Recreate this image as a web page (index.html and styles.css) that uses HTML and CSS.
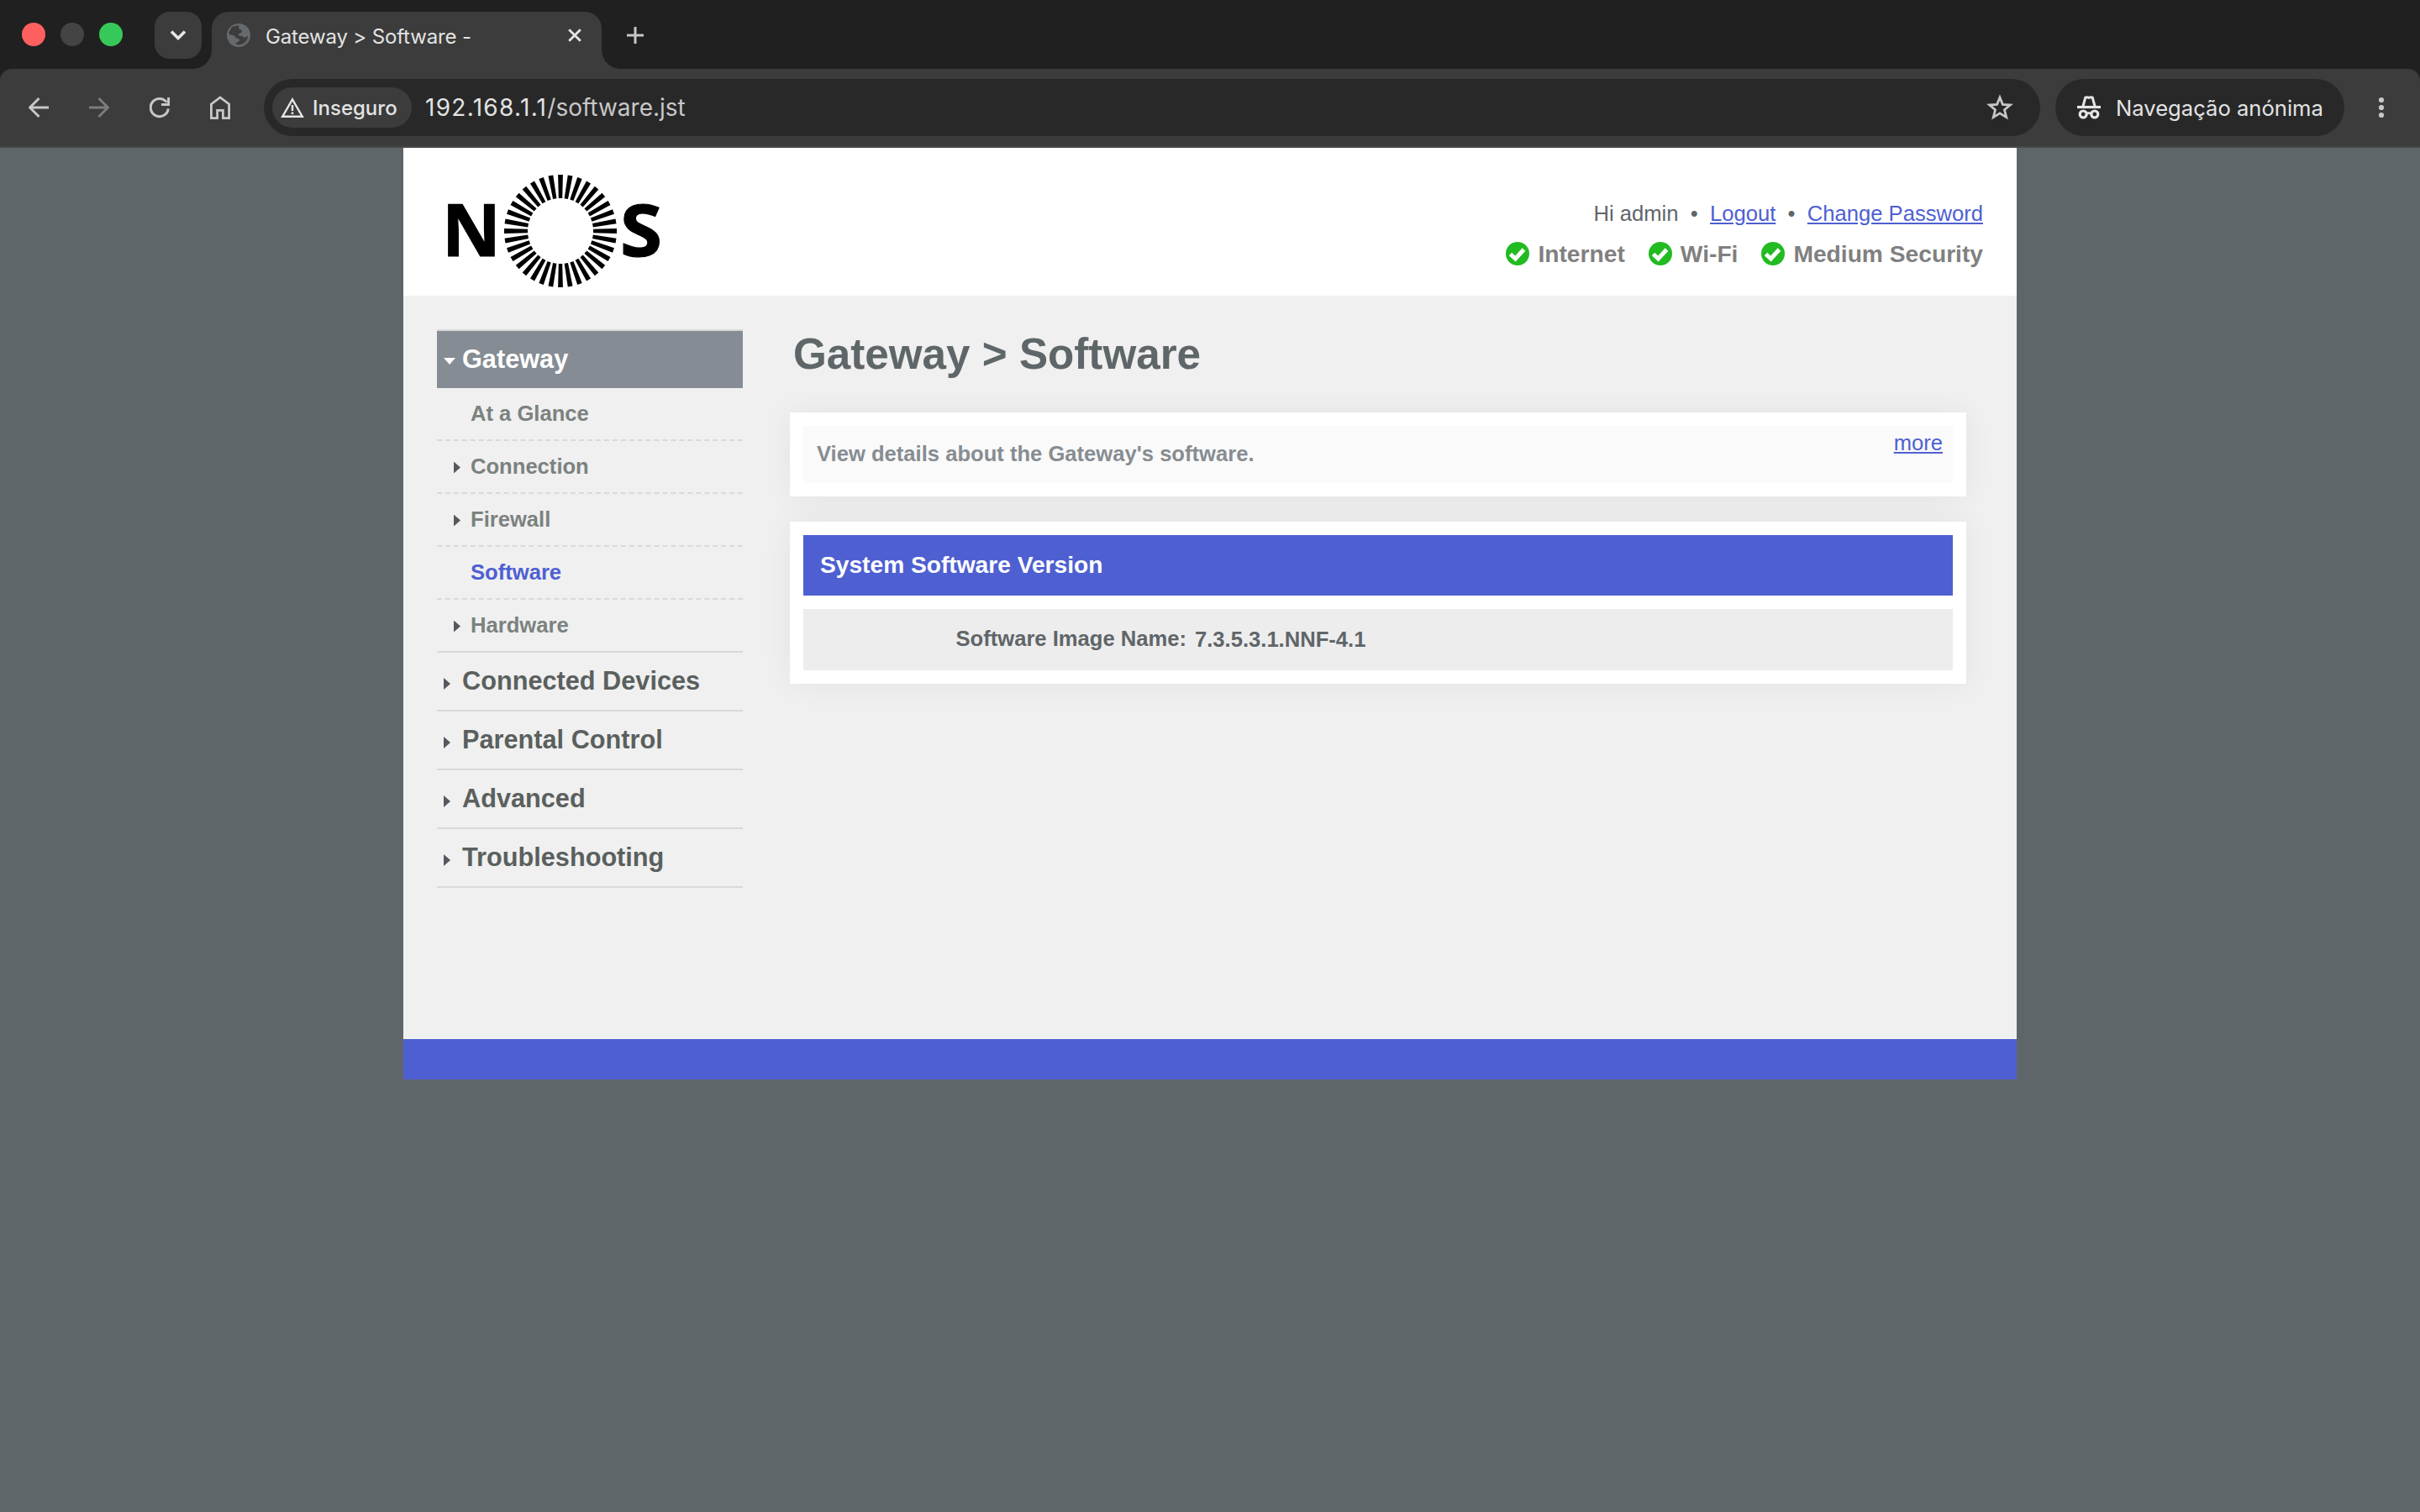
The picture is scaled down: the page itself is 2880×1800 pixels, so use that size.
FILE: index.html
```
<!DOCTYPE html>
<html lang="pt">
<head>
  <meta charset="UTF-8">
  <title>Gateway &gt; Software -</title>
  <link rel="stylesheet" href="styles.css">
</head>
<body>

<div class="tabstrip">
  <div class="lights">
    <span class="light red"></span>
    <span class="light grey"></span>
    <span class="light green"></span>
  </div>
  <div class="tab-search">
    <svg width="20" height="14" viewBox="0 0 20 14"><path d="M2 2.5l8 8 8-8" fill="none" stroke="#e6e6e6" stroke-width="3.6"/></svg>
  </div>
  <div class="tab">
    <svg class="favicon" width="28" height="28" viewBox="0 0 28 28">
      <circle cx="14" cy="14" r="14" fill="#66696e"/>
      <path d="M15 3C13.500 5 14 7.500 17 7.500C18.500 9 17.500 11 16 11.500C14 12 13 13 14.500 14.500C18 14.500 20 15.500 20.500 17C22 16.500 24 15.500 25 14.500C25 20 21 25 14 25.200C12.500 25 11 24.500 10.500 23.500C12 21.500 14.500 22.500 14.800 20C14.500 17.500 13 17.500 10.500 17.200C10 14.500 8 13.500 3 13.500C3.500 7 8 3 15 3Z" fill="#3c3c3c"/>
      <path d="M4 12.500C6 13 8.500 12 10 12.500C12 13 13.500 12 13.500 10C13 8 11 8.500 11 6.500L13.500 2L6 4L2 11Z" fill="#3c3c3c"/>
      <path d="M17 3.500C20.500 4.500 24 8 24.500 12C22.500 14 19.500 13 18.500 11.500C19.500 9 19 7 16.500 6Z" fill="#66696e"/>
    </svg>
    <span class="tab-title">Gateway &gt; Software -</span>
    <svg class="tab-close" width="16" height="16" viewBox="0 0 16 16"><path d="M1.200 1.200l13.600 13.600M14.800 1.200L1.200 14.800" stroke="#e6e6e6" stroke-width="2.800"/></svg>
  </div>
  <svg class="new-tab" width="20" height="20" viewBox="0 0 20 20"><path d="M10 0v20M0 10h20" stroke="#c7c7c7" stroke-width="3"/></svg>
</div>

<div class="toolbar">
  <div class="nav-icons">
    <svg width="24" height="28" viewBox="0 0 24 28"><path d="M24 14H2M12.500 3L1.600 14l10.900 11" fill="none" stroke="#c7c7c7" stroke-width="3"/></svg>
    <svg width="24" height="28" viewBox="0 0 24 28"><path d="M0 14h22M11.500 3l10.900 11-10.900 11" fill="none" stroke="#7c7c7c" stroke-width="3"/></svg>
    <svg width="24" height="28" viewBox="0 0 24 28"><path d="M22.300 15.500A10.600 10.600 0 1 1 20.300 7.700M22.600 2v8.600H14" fill="none" stroke="#c7c7c7" stroke-width="3"/></svg>
    <svg width="24" height="28" viewBox="0 0 24 28"><path d="M1.400 10L12 2l10.600 8v16.600H15.400v-9.200H8.600v9.200H1.400z" fill="none" stroke="#c7c7c7" stroke-width="2.800"/></svg>
  </div>
  <div class="omnibox">
    <div class="chip">
      <svg width="28" height="24" viewBox="0 0 28 24"><path d="M14 2.400L25.800 22.700H2.200z" fill="none" stroke="#e6e6e6" stroke-width="2.400"/><path d="M14 9v7M14 17.500v2.600" stroke="#e6e6e6" stroke-width="2.500"/></svg>
      <span>Inseguro</span>
    </div>
    <div class="url"><b>192.168.1.1</b>/software.jst</div>
    <svg class="star" width="32" height="32" viewBox="0 0 32 32"><path d="M16 4l3.400 8.300 9 .7-6.900 5.800 2.200 8.800L16 22.900l-7.700 4.700 2.200-8.800L3.600 13l9-.7z" fill="none" stroke="#c7c7c7" stroke-width="2.800"/></svg>
  </div>
  <div class="incognito">
    <svg width="28" height="30" viewBox="0 0 28 30">
      <path d="M0 14.500h28" stroke="#e6e6e6" stroke-width="3.200"/>
      <path d="M6.800 14L9.800 3Q11.500 2.200 14 3.400Q16.500 2.200 18.200 3L21.200 14" fill="none" stroke="#e6e6e6" stroke-width="3"/>
      <circle cx="7.200" cy="23" r="4" fill="none" stroke="#e6e6e6" stroke-width="3.200"/>
      <circle cx="20.800" cy="23" r="4" fill="none" stroke="#e6e6e6" stroke-width="3.200"/>
      <path d="M10.500 22.500Q14 20.800 17.500 22.500" fill="none" stroke="#e6e6e6" stroke-width="2.600"/>
    </svg>
    <span>Navegação anónima</span>
  </div>
  <svg class="menu-dots" width="8" height="28" viewBox="0 0 8 28" fill="#c7c7c7"><circle cx="4" cy="5" r="3.100"/><circle cx="4" cy="14" r="3.100"/><circle cx="4" cy="23" r="3.100"/></svg>
</div>

<div class="container">
  <div class="header">
    <svg class="logo" width="280" height="136" viewBox="-20 0 280 136">
      <defs>
        <path id="ray" d="M130.100 1h5.800l-.7 28h-4.400z"/>
        <g id="quarter">
          <use href="#ray"/>
          <use href="#ray" transform="rotate(10 133 68)"/>
          <use href="#ray" transform="rotate(20 133 68)"/>
          <use href="#ray" transform="rotate(30 133 68)"/>
          <use href="#ray" transform="rotate(40 133 68)"/>
          <use href="#ray" transform="rotate(50 133 68)"/>
          <use href="#ray" transform="rotate(60 133 68)"/>
          <use href="#ray" transform="rotate(70 133 68)"/>
          <use href="#ray" transform="rotate(80 133 68)"/>
        </g>
      </defs>
      <text class="logo-letter" x="-8" y="98">N</text>
      <use href="#quarter"/>
      <use href="#quarter" transform="rotate(90 133 68)"/>
      <use href="#quarter" transform="rotate(180 133 68)"/>
      <use href="#quarter" transform="rotate(270 133 68)"/>
      <text class="logo-letter" x="204" y="98" textLength="50" lengthAdjust="spacingAndGlyphs">S</text>
    </svg>
    <div class="user-info">
      <div class="user-links">
        <span>Hi admin</span><span class="dot">•</span><a href="#">Logout</a><span class="dot">•</span><a href="#">Change Password</a>
      </div>
      <div class="status">
        <div class="status-item">
          <svg width="28" height="28" viewBox="0 0 28 28"><circle cx="14" cy="14" r="14" fill="#22bb22"/><path d="M5.500 14.500l6 5.500L21.500 9" fill="none" stroke="#fff" stroke-width="5"/></svg>
          <span>Internet</span>
        </div>
        <div class="status-item">
          <svg width="28" height="28" viewBox="0 0 28 28"><circle cx="14" cy="14" r="14" fill="#22bb22"/><path d="M5.500 14.500l6 5.500L21.500 9" fill="none" stroke="#fff" stroke-width="5"/></svg>
          <span>Wi-Fi</span>
        </div>
        <div class="status-item">
          <svg width="28" height="28" viewBox="0 0 28 28"><circle cx="14" cy="14" r="14" fill="#22bb22"/><path d="M5.500 14.500l6 5.500L21.500 9" fill="none" stroke="#fff" stroke-width="5"/></svg>
          <span>Medium Security</span>
        </div>
      </div>
    </div>
  </div>

  <div class="main">
    <ul class="nav">
      <li class="top active"><i class="arrow-down"></i>Gateway</li>
      <li class="sub">At a Glance</li>
      <li class="sub"><i class="arrow"></i>Connection</li>
      <li class="sub"><i class="arrow"></i>Firewall</li>
      <li class="sub selected">Software</li>
      <li class="sub last"><i class="arrow"></i>Hardware</li>
      <li class="top"><i class="arrow"></i>Connected Devices</li>
      <li class="top"><i class="arrow"></i>Parental Control</li>
      <li class="top"><i class="arrow"></i>Advanced</li>
      <li class="top"><i class="arrow"></i>Troubleshooting</li>
    </ul>

    <div class="content">
      <h1>Gateway &gt; Software</h1>
      <div class="card">
        <div class="tip">
          <p>View details about the Gateway's software.</p>
          <a href="#">more</a>
        </div>
      </div>
      <div class="card">
        <h2>System Software Version</h2>
        <div class="row">
          <span class="label">Software Image Name:</span>
          <span class="value">7.3.5.3.1.NNF-4.1</span>
        </div>
      </div>
    </div>
  </div>

  <div class="footer"></div>
</div>

</body>
</html>
```
FILE: styles.css
```
* {
  box-sizing: border-box;
}
body {
  margin: 0;
  height: 1800px;
  overflow: hidden;
  background: #5f6669;
  color: #5f6669;
  font-family: "Liberation Sans", Arial, sans-serif;
  font-size: 25.6px;
}
svg {
  display: block;
  flex: none;
}
a {
  color: #4e60d1;
}

/* browser chrome */
.tabstrip {
  display: flex;
  height: 82px;
  padding: 14px 0 0 26px;
  background: #202020;
  font-family: Inter, sans-serif;
}
.lights {
  display: flex;
  gap: 18px;
  margin-top: 13px;
}
.light {
  width: 28px;
  height: 28px;
  border-radius: 50%;
}
.red {
  background: #ff5f5f;
}
.grey {
  background: #444;
}
.green {
  background: #36c95a;
}
.tab-search {
  display: flex;
  align-items: center;
  justify-content: center;
  width: 56px;
  height: 56px;
  margin-left: 38px;
  border-radius: 18px;
  background: #3c3c3c;
}
.tab {
  position: relative;
  display: flex;
  align-items: center;
  width: 464px;
  height: 68px;
  margin-left: 12px;
  padding: 0 24px 12px 18px;
  border-radius: 20px 20px 0 0;
  background: #3c3c3c;
}
/* curved feet of the tab */
.tab::before,
.tab::after {
  content: "";
  position: absolute;
  bottom: 0;
  width: 22px;
  height: 22px;
}
.tab::before {
  left: -22px;
  background: radial-gradient(circle at 0 0, transparent 21.5px, #3c3c3c 22px);
}
.tab::after {
  right: -22px;
  background: radial-gradient(circle at 100% 0, transparent 21.5px, #3c3c3c 22px);
}
.tab-title {
  margin-left: 18px;
  padding-top: 2px;
  color: #e3e3e3;
  font-size: 24px;
  letter-spacing: -0.15px;
  white-space: nowrap;
}
.tab-close {
  margin-left: auto;
}
.new-tab {
  margin: 18px 0 0 30px;
}
.toolbar {
  display: flex;
  align-items: center;
  height: 94px;
  padding: 0 42px 0 34px;
  border-bottom: 2px solid #484848;
  border-radius: 14px 14px 0 0;
  background: #3c3c3c;
  box-shadow: 0 -14px 0 #202020;
  color: #e3e3e3;
  font-family: Inter, sans-serif;
}
.nav-icons {
  display: flex;
  gap: 48px;
}
.omnibox {
  display: flex;
  align-items: center;
  width: 2114px;
  height: 68px;
  margin-left: 40px;
  padding: 0 32px 0 10px;
  border-radius: 34px;
  background: #282828;
}
.chip {
  display: flex;
  align-items: center;
  width: 166px;
  height: 48px;
  padding-left: 10px;
  border-radius: 24px;
  background: #3c3c3c;
  font-size: 24px;
  font-weight: 500;
}
.chip span {
  margin-left: 10px;
}
.url {
  margin-left: 16px;
  color: #c7c7c7;
  font-size: 28px;
}
.url b {
  color: #e3e3e3;
  font-weight: normal;
  letter-spacing: 1.3px;
}
.star {
  margin-left: auto;
}
.incognito {
  display: flex;
  align-items: center;
  width: 344px;
  height: 68px;
  margin-left: 18px;
  padding-left: 26px;
  border-radius: 34px;
  background: #282828;
  font-size: 25.6px;
  white-space: nowrap;
}
.incognito span {
  margin-left: 18px;
}
.menu-dots {
  margin-left: auto;
}

/* gateway page */
.container {
  width: 1920px;
  margin: 0 auto;
  background: #f0f0f0;
}
.header {
  display: flex;
  justify-content: space-between;
  height: 176px;
  padding: 31px 40px 0 34px;
  background: #fff;
}
.logo-letter {
  font-family: "Noto Sans", sans-serif;
  font-size: 86px;
  font-weight: bold;
  fill: #000;
  stroke: #000;
  stroke-width: 1.2px;
}
.user-info {
  padding-top: 32px;
}
.user-links {
  display: flex;
  justify-content: flex-end;
  line-height: 30px;
}
.dot {
  margin: 0 14.3px;
}
.status {
  display: flex;
  justify-content: flex-end;
  gap: 28px;
  margin-top: 17px;
  color: #808080;
  font-size: 28.2px;
  font-weight: bold;
  line-height: 32px;
}
.status-item {
  display: flex;
  align-items: center;
  gap: 10px;
}
.main {
  display: flex;
  height: 885px;
  padding: 40px 60px 0 40px;
}
.nav {
  width: 364px;
  margin: 0;
  padding: 0;
  border-top: 2px solid #d9d9d9;
  list-style: none;
  font-weight: bold;
}
.nav li {
  display: flex;
  align-items: center;
}
.top {
  height: 70px;
  padding: 0 0 1px 8px;
  border-bottom: 2px solid #d9d9d9;
  color: #5a605e;
  font-size: 30.7px;
}
.top.active {
  height: 68px;
  border-bottom: 0;
  background: #858c93;
  color: #fff;
}
.sub {
  height: 63px;
  padding-left: 40px;
  border-bottom: 2px dashed #d9d9d9;
  color: #7b827f;
}
.sub.last {
  border-bottom-style: solid;
}
.selected {
  color: #4e60d1;
}
.arrow {
  width: 8px;
  height: 14px;
  background: #55595d;
  clip-path: polygon(0 0, 100% 50%, 0 100%);
}
.top .arrow {
  margin: 7px 14px 0 0;
}
.sub .arrow {
  margin: 2px 12px 0 -20px;
}
.arrow-down {
  width: 14px;
  height: 8px;
  margin: 5px 8px 0 0;
  background: #fff;
  clip-path: polygon(0 0, 100% 0, 50% 100%);
}
.content {
  width: 1400px;
  margin-left: 56px;
}
h1 {
  margin: 0 0 40px 4px;
  font-size: 51.2px;
  line-height: 59px;
}
.card {
  margin-bottom: 30px;
  padding: 16px;
  background: #fff;
  box-shadow: 0 0 36px rgba(0, 0, 0, 0.06);
}
.tip {
  display: flex;
  justify-content: space-between;
  height: 68px;
  padding: 0 12px 0 16px;
  background: #fafafa;
}
.tip p {
  margin: 19px 0 0;
  color: #868d92;
  font-weight: bold;
}
.tip a {
  margin-top: 6px;
}
h2 {
  margin: 0 0 16px;
  padding-left: 20px;
  background: #4e60d1;
  color: #fff;
  font-size: 28.16px;
  line-height: 71px;
  height: 72px;
}
.row {
  display: flex;
  height: 73px;
  padding-top: 21px;
  background: #ededed;
  font-weight: bold;
}
.label {
  width: 456px;
  text-align: right;
}
.value {
  margin: 1px 0 0 10px;
}
.footer {
  height: 48px;
  background: #4e60d1;
}
```
